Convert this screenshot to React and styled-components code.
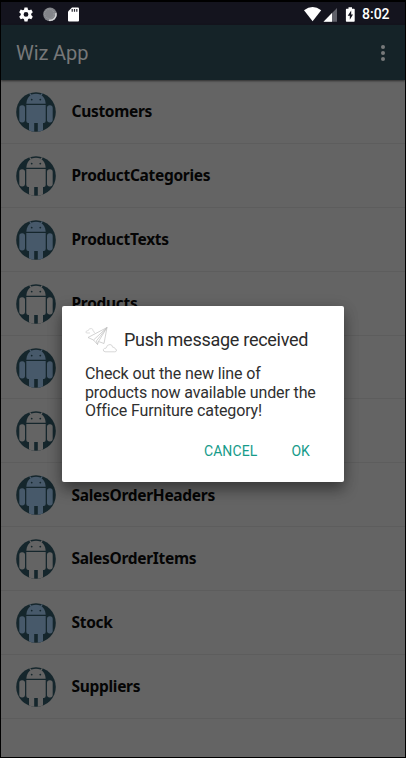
import React from "react";
import styled, { createGlobalStyle } from "styled-components";

const GlobalStyle = createGlobalStyle`
  * { box-sizing: border-box; }
  html, body { margin: 0; padding: 0; background: #000; overflow: hidden; }
`;

const Phone = styled.main`
  position: relative;
  width: 406px;
  height: 758px;
  padding: 2px 1px 1px;
  display: flex;
  flex-direction: column;
  overflow: hidden;
  background: #000;
  font-family: Roboto, "Noto Sans", sans-serif;
`;

const StatusBar = styled.div`
  flex: none;
  height: 23px;
  padding: 0 15px 0 17px;
  display: flex;
  align-items: center;
  justify-content: space-between;
  background: #14141e;
`;

const StatusGroup = styled.div`
  display: flex;
  align-items: center;
  svg { display: block; }
`;

const Clock = styled.span`
  width: 28px;
  margin-left: 7px;
  color: #fff;
  font-size: 14px;
  font-weight: 500;
  line-height: 20px;
  white-space: nowrap;
`;

const AppBar = styled.header`
  position: relative;
  flex: none;
  height: 55px;
  padding: 0 19px 0 15px;
  display: flex;
  align-items: center;
  justify-content: space-between;
  background: #152328;
  box-shadow: 0 1px 2px rgba(0, 0, 0, 0.55);
`;

const AppTitle = styled.h1`
  margin: 0;
  color: #777879;
  font-size: 20px;
  font-weight: 400;
  line-height: 24px;
  letter-spacing: -0.1px;
`;

const List = styled.ul`
  flex: 1;
  margin: 0;
  padding: 0;
  list-style: none;
  background: #646464;
`;

const Row = styled.li`
  height: 63.9px;
  padding: 1px 15px 0;
  display: flex;
  align-items: center;
  gap: 15.5px;
  border-bottom: 1px solid #5d5d5d;
  svg { display: block; flex: none; }
`;

const RowLabel = styled.span`
  margin-bottom: 1.5px;
  color: #050505;
  font-family: "Noto Sans", sans-serif;
  font-size: 15.5px;
  font-weight: 700;
  line-height: 20px;
  letter-spacing: -0.3px;
`;

const Dialog = styled.section`
  position: absolute;
  left: 61.5px;
  top: 305.5px;
  width: 282.5px;
  height: 176px;
  padding: 20px 23px 0 23.5px;
  border-radius: 2px;
  background: #fff;
  box-shadow: 0 8px 14px rgba(0, 0, 0, 0.34), 0 3px 16px rgba(0, 0, 0, 0.16);
`;

const DialogHeader = styled.div`
  display: flex;
  align-items: center;
  gap: 6px;
  height: 28px;
  svg { display: block; flex: none; }
`;

const DialogTitle = styled.h2`
  margin: 0;
  color: #2b2b2b;
  font-size: 18px;
  font-weight: 400;
  line-height: 24px;
  letter-spacing: -0.27px;
  white-space: nowrap;
`;

const Message = styled.p`
  margin: 11.5px 0 0;
  color: #303030;
  font-size: 16px;
  line-height: 18.7px;
  letter-spacing: -0.13px;
  white-space: nowrap;
`;

const Actions = styled.div`
  display: flex;
  justify-content: flex-end;
  gap: 34px;
  margin-top: 21px;
  padding-right: 11px;
`;

const Action = styled.button`
  padding: 0;
  border: 0;
  background: none;
  color: #169b8a;
  font-family: Roboto, sans-serif;
  font-size: 14px;
  line-height: 18px;
  letter-spacing: 0.1px;
`;

function Avatar({ filled, id }) {
  const fill = filled ? "#47596a" : "#646464";
  return (
    <svg width="40" height="40" viewBox="0 0 40 40">
      <clipPath id={id}><circle cx="20" cy="20" r="19.8" /></clipPath>
      <g clipPath={`url(#${id})`}>
        <rect width="40" height="40" fill="#15262c" />
        <g fill={fill}>
          <path d="M10.3 11.7C10.6 7.2 12.6 3.9 15.6 2.5Q20 .9 24.4 2.5C27.4 3.9 29.4 7.2 29.7 11.7Z" />
          <path d="M12.4.6L13.5.1L15.8 3.3L14.8 4ZM27.6.6L26.5.1L24.2 3.3L25.2 4Z" />
          <path d="M10.3 13H29.7V29Q29.7 31 27.7 31H27V41H21.8V31H18.2V41H13V31H12.3Q10.3 31 10.3 29Z" />
          <rect x="3.3" y="13.2" width="5.7" height="17.2" rx="2.7" />
          <rect x="31" y="13.2" width="5.7" height="17.2" rx="2.7" />
        </g>
        <circle cx="15.7" cy="7.6" r=".9" fill="#15262c" />
        <circle cx="24.3" cy="7.6" r=".9" fill="#15262c" />
      </g>
    </svg>
  );
}

function SystemIcons() {
  return (
    <svg width="64" height="18" viewBox="18 4 64 18">
      <path fill="#fff" fillRule="evenodd" d="M24.5 6.5H27.5L28 8.7L29.1 9.3L31.3 8.6L32.8 11.2L31.2 12.8V14.1L32.8 15.7L31.3 18.3L29.1 17.6L28 18.2L27.5 20.4H24.5L24 18.2L22.9 17.6L20.7 18.3L19.2 15.7L20.8 14.1V12.8L19.2 11.2L20.7 8.6L22.9 9.3L24 8.7ZM28.4 13.45A2.4 2.4 0 1 0 23.6 13.45A2.4 2.4 0 1 0 28.4 13.45Z" />
      <circle cx="50" cy="13.4" r="6.8" fill="#828489" />
      <path d="M55.9 12A6 6 0 0 1 49 19.2" fill="none" stroke="#d4d5d7" strokeWidth="1.5" />
      <circle cx="49.3" cy="12.8" r="4.7" fill="none" stroke="#a1a3a6" strokeWidth=".8" strokeDasharray="1 1" />
      <path fill="#fff" d="M72 6.5H78Q79 6.5 79 7.5V19.5Q79 20.5 78 20.5H69Q68 20.5 68 19.5V10.5Z" />
      <path stroke="#292932" strokeWidth="1.2" d="M72.2 8V10.8M74.5 8V10.8M76.8 8V10.8" />
    </svg>
  );
}

function SignalIcons() {
  return (
    <svg width="52" height="18" viewBox="303 4 52 18">
      <path fill="#fff" d="M304 9.3Q312.6 2.7 321.2 9.3L312.6 20.3Z" />
      <path fill="#60616a" d="M337 7V20.7H323.5Z" />
      <path fill="#fff" d="M332 12V20.7H323.5Z" />
      <path fill="#fff" d="M348.5 6.2H352V7.7H354Q354.7 7.7 354.7 8.4V20Q354.7 20.8 354 20.8H346.6Q345.9 20.8 345.9 20V8.4Q345.9 7.7 346.6 7.7H348.5Z" />
      <path fill="#14141e" d="M351.2 9.5L347.7 14.7H349.8V18.8L353 13.4H351.2Z" />
    </svg>
  );
}

function MoreIcon() {
  return (
    <svg width="6" height="18" viewBox="0 0 6 18">
      <g fill="#77797a"><circle cx="3" cy="3" r="2" /><circle cx="3" cy="9" r="2" /><circle cx="3" cy="15" r="2" /></g>
    </svg>
  );
}

function PlaneIcon() {
  return (
    <svg width="33" height="28" viewBox="0 0 33 28" fill="none" stroke="#bebebe" strokeWidth=".7" strokeLinejoin="round">
      <path d="M22 1.5L3 11.5L8.5 14L12.5 18.5L13.5 15.5L19 17.5Z" />
      <path d="M22 1.5L8.5 14M22 1.5L11.5 14.8L12.5 18.5M13.5 15.5L22 1.5" />
      <path stroke="#d0d0d0" d="M5 7H1.5Q.2 6.2 1.6 4.9Q2.7 4.5 3 4.9Q4 1.8 6.8 2.6Q8.5 3.4 8 5Q10 5.6 9.3 7" />
      <path stroke="#c7c7c7" d="M20 25.8Q18 25.5 18.4 23.5Q19.2 21.8 21 22.2Q22 18.3 25 18.5Q27.5 18.8 27.6 21.2Q29.8 20.9 30 22.8Q32 23.2 31.4 25Q31 25.8 29.8 25.8Z" />
    </svg>
  );
}

const entries = [
  "Customers", "ProductCategories", "ProductTexts", "Products", "", "",
  "SalesOrderHeaders", "SalesOrderItems", "Stock", "Suppliers",
];

export default function App() {
  return (
    <>
      <GlobalStyle />
      <Phone>
        <StatusBar>
          <StatusGroup><SystemIcons /></StatusGroup>
          <StatusGroup><SignalIcons /><Clock>8:02</Clock></StatusGroup>
        </StatusBar>
        <AppBar><AppTitle>Wiz App</AppTitle><MoreIcon /></AppBar>
        <List>
          {entries.map((name, index) => (
            <Row key={index}>
              <Avatar filled={index % 2 === 0} id={`avatar-${index}`} />
              {name && <RowLabel>{name}</RowLabel>}
            </Row>
          ))}
        </List>
        <Dialog role="dialog" aria-labelledby="push-title">
          <DialogHeader><PlaneIcon /><DialogTitle id="push-title">Push message received</DialogTitle></DialogHeader>
          <Message>Check out the new line of<br />products now available under the<br />Office Furniture category!</Message>
          <Actions><Action>CANCEL</Action><Action>OK</Action></Actions>
        </Dialog>
      </Phone>
    </>
  );
}
